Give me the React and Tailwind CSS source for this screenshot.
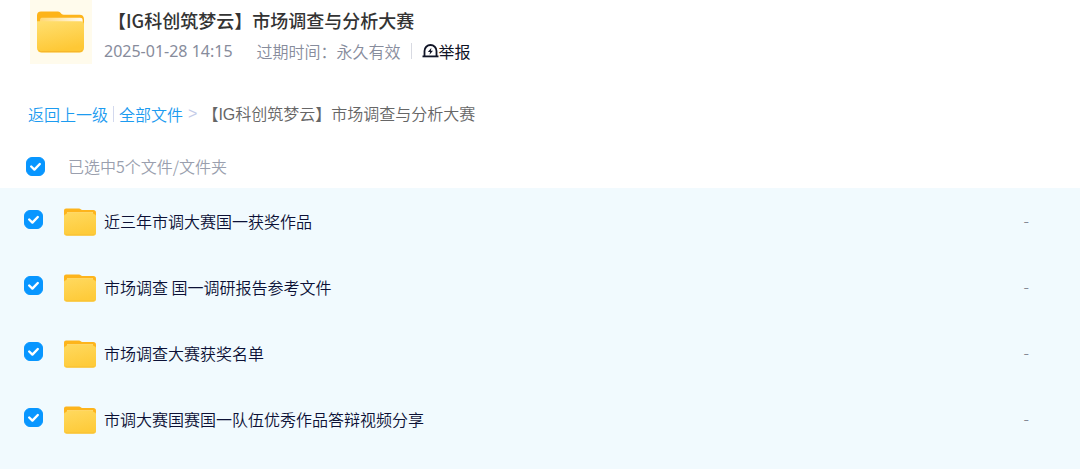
import React, { useState } from 'react';

const FILES = [
  { id: 1, name: '近三年市调大赛国一获奖作品', size: '-' },
  { id: 2, name: '市场调查 国一调研报告参考文件', size: '-' },
  { id: 3, name: '市场调查大赛获奖名单', size: '-' },
  { id: 4, name: '市调大赛国赛国一队伍优秀作品答辩视频分享', size: '-' },
];

const TOTAL = 5;

const SmallFolder = () => (
  <svg width="32" height="28" viewBox="0 0 32 28" aria-hidden="true" className="shrink-0">
    <defs>
      <linearGradient id="smallFront" x1="0" y1="0" x2="0.3" y2="1">
        <stop offset="0" stopColor="#ffd95f" />
        <stop offset="1" stopColor="#fecb3a" />
      </linearGradient>
    </defs>
    <path d="M0 2.5A2 2 0 0 1 2 .5H15c1.600 0 1.800 1.600 3.400 1.600h10.800A2.800 2.800 0 0 1 32 4.900V12H0z" fill="#fdb41c" />
    <path d="M3 4.200h26v4H3z" fill="#ffe08a" />
    <path d="M0 8.200c0-1.200.8-1.700 1.800-1.900.8-.2 1-1.900 2.600-1.900h23.200c1.600 0 1.600 1.700 2.600 1.900 1 .2 1.800.7 1.800 1.900V25a2.700 2.700 0 0 1-2.700 2.700H2.700A2.700 2.700 0 0 1 0 25z" fill="url(#smallFront)" />
    <path d="M1 25.600c.6.900 1.200 1.300 2.200 1.300h25.600c1 0 1.700-.4 2.200-1.300" fill="none" stroke="#f8bf34" strokeWidth="0.8" />
  </svg>
);

const LargeFolder = () => (
  <svg width="48" height="42" viewBox="0 0 48 42" aria-hidden="true">
    <defs>
      <linearGradient id="largeFront" x1="0" y1="0" x2="0.3" y2="1">
        <stop offset="0" stopColor="#ffdf70" />
        <stop offset="1" stopColor="#fec835" />
      </linearGradient>
      <linearGradient id="largePaper" x1="0" y1="0" x2="1" y2="0">
        <stop offset="0" stopColor="#ffd873" />
        <stop offset="1" stopColor="#fffaf0" />
      </linearGradient>
    </defs>
    <path d="M0 4.500A4 4 0 0 1 4 .5H21c2.600 0 3 3.200 5.600 3.200h15.900A4.500 4.500 0 0 1 47 8v10H0z" fill="#fdb41a" />
    <path d="M3 9c0-1.600 1-2.200 2.600-2.200H43c1.800 0 2.600.8 2.600 2.400V14H3z" fill="url(#largePaper)" />
    <path d="M0 10.200h43.500A3.500 3.500 0 0 1 47 13.700V37a4.500 4.500 0 0 1-4.500 4.500h-38A4.500 4.500 0 0 1 0 37z" fill="url(#largeFront)" />
    <path d="M1.500 38.800c.7 1.300 1.700 1.900 3.200 1.900h37.600c1.500 0 2.500-.6 3.200-1.900" fill="none" stroke="#f5b32a" strokeWidth="1" />
  </svg>
);

const ReportIcon = () => (
  <svg width="17" height="16" viewBox="0 0 17 16" fill="none" stroke="#101426" strokeWidth="1.800" aria-hidden="true">
    <path d="M2.500 13.200V8a6 6 0 0 1 12 0v5.200" />
    <path d="M0.500 13.400h16" />
    <path d="M9.400 4.800L5.900 8.900h2.200l-.6 2.800 3.500-4H8.900z" fill="#101426" stroke="none" />
  </svg>
);

const Checkbox = ({ id, label, checked, onChange }) => (
  <span className="relative block h-[19px] w-[19px] shrink-0">
    <input
      id={id}
      type="checkbox"
      aria-label={label}
      checked={checked}
      onChange={onChange}
      className="block h-full w-full cursor-pointer appearance-none rounded-[6px] border border-gray-300 bg-white checked:border-[#0896ff] checked:bg-[#0896ff]"
    />
    {checked && (
      <svg viewBox="0 0 19 19" className="pointer-events-none absolute inset-0 h-full w-full" aria-hidden="true">
        <path d="M5.200 9.500l3.200 3.100 5.400-5.600" fill="none" stroke="#fff" strokeWidth="2.400" strokeLinecap="round" strokeLinejoin="round" />
      </svg>
    )}
  </span>
);

export default function App() {
  const [selected, setSelected] = useState(FILES.map((f) => f.id));
  const allSelected = selected.length === FILES.length;

  const toggle = (id) => {
    setSelected((prev) => (prev.includes(id) ? prev.filter((x) => x !== id) : [...prev, id]));
  };

  const toggleAll = () => setSelected(allSelected ? [] : FILES.map((f) => f.id));

  return (
    <div className="flex min-h-screen flex-col bg-white font-['Noto_Sans_CJK_SC',sans-serif] text-base leading-6 font-[350]">
      {/* share info */}
      <header className="flex h-16 gap-3 pl-[30px]">
        <div className="flex h-16 w-[62px] items-center justify-center bg-[#fffbec]">
          <LargeFolder />
        </div>
        <div className="pt-2">
          <h1 className="pl-1 text-lg leading-6 font-medium text-[#333]">【IG科创筑梦云】市场调查与分析大赛</h1>
          <div className="mt-[7px] flex items-center leading-6 text-[#878c9c]">
            <time className="font-['Noto_Sans',sans-serif] font-normal">2025-01-28 14:15</time>
            <span className="ml-6">过期时间：永久有效</span>
            <span className="ml-[10px] h-4 w-px bg-[#d8dae2]" />
            <button type="button" className="ml-[10px] flex cursor-pointer items-center font-normal text-[#101426]">
              <ReportIcon />
              举报
            </button>
          </div>
        </div>
      </header>

      {/* breadcrumb */}
      <nav className="mt-[38px] flex h-6 items-center pl-7 leading-6">
        <a href="#back" className="text-[#1c9bf0]">返回上一级</a>
        <span className="mx-[5px] h-4 w-px bg-[#d3d9ee]" />
        <a href="#all" className="text-[#1c9bf0]">全部文件</a>
        <span className="mx-[5px] font-['Liberation_Sans',sans-serif] text-[#c4cbe8]">&gt;</span>
        <span className="text-[#666]">
          【<span className="font-['Liberation_Sans',sans-serif]">IG</span>科创筑梦云】市场调查与分析大赛
        </span>
      </nav>

      <div className="mt-7 flex h-[34px] items-start pl-[26px]">
        <div className="flex h-6 items-center gap-[23px]">
          <Checkbox id="check-all" checked={allSelected} onChange={toggleAll} />
          <label htmlFor="check-all" className="text-[#9a9fae]">
            {allSelected ? `已选中${TOTAL}个文件/文件夹` : `已选中${selected.length}个文件/文件夹`}
          </label>
        </div>
      </div>

      <ul className="flex-1 bg-[#f1fafe]">
        {FILES.map((file) => (
          <li key={file.id} className="flex h-[66px] items-center pr-[51px] pl-6">
            <div className="pb-[3px]">
              <Checkbox
                id={`file-${file.id}`}
                checked={selected.includes(file.id)}
                onChange={() => toggle(file.id)}
              />
            </div>
            <div className="ml-[21px] pt-[2px]">
              <SmallFolder />
            </div>
            <label htmlFor={`file-${file.id}`} className="ml-2 flex-1 cursor-pointer text-[#0c1136]">
              {file.name}
            </label>
            <span className="pb-[2px] text-[#858a96]">{file.size}</span>
          </li>
        ))}
      </ul>
    </div>
  );
}
